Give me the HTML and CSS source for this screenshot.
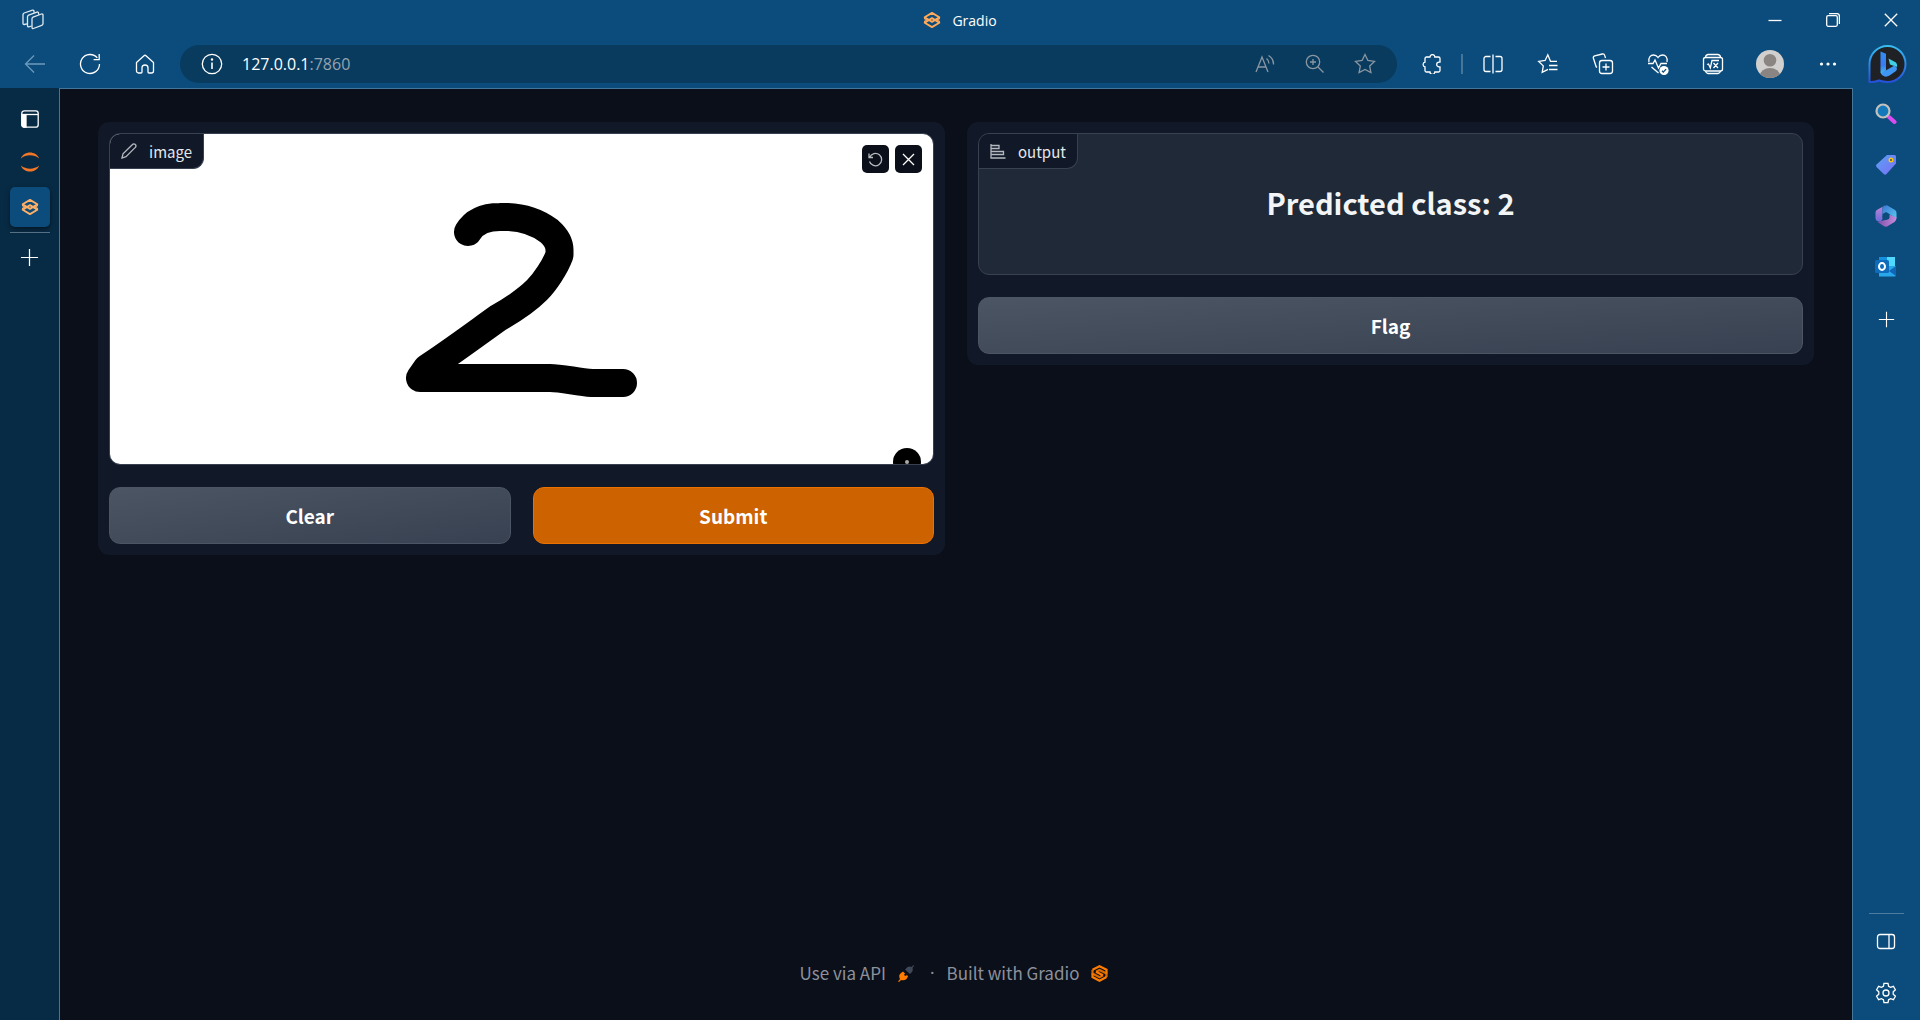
FILE: index.html
```html
<!DOCTYPE html>
<html lang="en">
<head>
<meta charset="utf-8">
<title>Gradio</title>
<link rel="stylesheet" href="styles.css">
</head>
<body>
<svg class="defs" aria-hidden="true">
  <defs>
    <symbol id="gradio" viewBox="0 0 24 24">
      <g fill="none" stroke="currentColor" stroke-width="2.400" stroke-linejoin="round">
        <path d="M12 2.500 21.800 8.300 12 14.500 2.200 8.300Z"/>
        <path d="M12 9.500 21.800 15.700 12 21.500 2.200 15.700Z"/>
        <path d="M2.200 8.300v2l3 1.700-3 1.700v2M21.800 8.300v2l-3 1.700 3 1.700v2" stroke-width="1.600"/>
      </g>
    </symbol>
    <symbol id="plus" viewBox="0 0 20 20"><path d="M10 1v18M1 10h18" fill="none" stroke="currentColor" stroke-width="1.3"/></symbol>
    <linearGradient id="bingRing" x1="0" y1="0" x2="0" y2="1"><stop offset="0" stop-color="#37bdf0"/><stop offset="1" stop-color="#2450d8"/></linearGradient>
    <linearGradient id="bingB" x1="0" y1="0" x2="0" y2="1"><stop offset="0" stop-color="#2f8ff5"/><stop offset=".6" stop-color="#3a7af2"/><stop offset="1" stop-color="#43c6ee"/></linearGradient>
    <linearGradient id="tagFill" x1="0" y1="0" x2="1" y2="1"><stop offset="0" stop-color="#5ba2f4"/><stop offset="1" stop-color="#7a6df5"/></linearGradient>
    <linearGradient id="mA" x1="0" y1="0" x2="0" y2="1"><stop offset="0" stop-color="#c684d8"/><stop offset="1" stop-color="#6a6bd8"/></linearGradient>
    <linearGradient id="mB" x1="0" y1="0" x2="1" y2="1"><stop offset="0" stop-color="#3b78d4"/><stop offset="1" stop-color="#58c9ee"/></linearGradient>
    <linearGradient id="mC" x1="0" y1="0" x2="1" y2="0"><stop offset="0" stop-color="#7b4fa8"/><stop offset="1" stop-color="#c98bdc"/></linearGradient>
  </defs>
</svg>

<header class="chrome">
  <div class="titlebar">
    <button class="workspaces" aria-label="Workspaces">
      <svg width="22" height="22" viewBox="0 0 22 22" class="line"><path d="M11 8.200l8.500-3.200a1.100 1.100 0 0 1 1.500 1v8.500a2 2 0 0 1-1.300 1.900L11.400 19.500a1 1 0 0 1-1.400-1V9.800a1.800 1.800 0 0 1 1-1.600Z"/><path d="M9.500 17 6.800 17.800A1 1 0 0 1 5.500 16.800V7.800A2 2 0 0 1 6.600 6.100L15 3.100a1.200 1.200 0 0 1 1.600 1.200v1.500"/><path d="M5 14.800 2.200 15.500A1 1 0 0 1 1 14.500V5.600A2 2 0 0 1 2.200 4L10.500 1.200A1.200 1.200 0 0 1 12 2.200v1.500"/></svg>
    </button>
    <div class="title"><svg width="18" height="18"><use href="#gradio"/></svg><span>Gradio</span></div>
    <div class="window-buttons">
      <button aria-label="Minimize"><svg width="14" height="14" class="line"><path d="M.5 7.500h13"/></svg></button>
      <button aria-label="Restore"><svg width="14" height="14" class="line"><rect x=".7" y="2.700" width="10.600" height="10.600" rx="1.500"/><path d="M3 .6h8a2.400 2.400 0 0 1 2.400 2.400v8"/></svg></button>
      <button aria-label="Close"><svg width="14" height="14" class="line"><path d="M.8.8l12.400 12.400M13.200.8.8 13.200"/></svg></button>
    </div>
  </div>
  <nav class="toolbar">
    <button class="tool faded" aria-label="Back"><svg width="22" height="20" class="line"><path d="M21 10H1.500M10 1.500 1.500 10l8.500 8.500"/></svg></button>
    <button class="tool" aria-label="Refresh"><svg width="22" height="22" class="line"><path d="M20.500 11a9.500 9.500 0 1 1-2.200-6.100M20.200 1v5.600h-5.600"/></svg></button>
    <button class="tool" aria-label="Home"><svg width="20" height="20" class="line"><path d="M1.500 8.500 9 1.700a1.500 1.500 0 0 1 2 0l7.500 6.800V17a2 2 0 0 1-2 2H14a1 1 0 0 1-1-1v-4a3 3 0 0 0-6 0v4a1 1 0 0 1-1 1H3.500a2 2 0 0 1-2-2Z"/></svg></button>
    <div class="address">
      <svg width="22" height="22" class="line"><circle cx="11" cy="11" r="9.700"/><path d="M11 9.500v6.500" stroke-width="1.600"/><circle cx="11" cy="6.500" r=".6" fill="currentColor"/></svg>
      <p class="url"><span>127.0.0.1</span>:7860</p>
      <button class="hint" aria-label="Read aloud"><svg width="20" height="20" class="line"><path d="M1 18 7 3l6 15M3 13h8M11.500 4.500a6.500 6.500 0 0 1 2.500 5M13.500 1.500a10 10 0 0 1 5 9"/></svg></button>
      <button class="hint" aria-label="Zoom"><svg width="20" height="20" class="line"><circle cx="8" cy="8" r="6.700"/><path d="M13 13l5.500 5.500M8 5v6M5 8h6"/></svg></button>
      <button class="hint" aria-label="Add to favorites"><svg width="22" height="22" class="line"><path d="M11 1.500l2.900 6 6.600.9-4.800 4.600 1.200 6.600-5.900-3.200-5.900 3.200 1.200-6.600L1.500 8.400l6.600-.9Z"/></svg></button>
    </div>
    <button class="tool ext" aria-label="Extensions"><svg width="20" height="20" class="line"><path d="M8 3a2.400 2.400 0 0 1 4.800 0h3.700a1.500 1.500 0 0 1 1.500 1.500v3.700h-1a2.300 2.300 0 0 0 0 4.600h1v3.700a1.500 1.500 0 0 1-1.500 1.500h-3.700a2.400 2.400 0 0 1-4.800 0H4.500A1.500 1.500 0 0 1 3 16.500v-3.700a2.400 2.400 0 0 1 0-4.700V4.500A1.500 1.500 0 0 1 4.500 3Z"/></svg></button>
    <span class="divider"></span>
    <button class="tool" aria-label="Split screen"><svg width="20" height="20" class="line"><path d="M7.500 2.500H3a2 2 0 0 0-2 2v11a2 2 0 0 0 2 2h4.500M12.500 2.500H17a2 2 0 0 1 2 2v11a2 2 0 0 1-2 2h-4.500M10 .5v19"/></svg></button>
    <button class="tool" aria-label="Favorites"><svg width="22" height="22" class="line"><path d="M20 8.300h-6.500l-2.700-6.500-2.700 5.700-6.400.9 4.600 4.500-1.100 6.500 5.800-3M12 12.500h8.500M12 16.500h8.500"/></svg></button>
    <button class="tool" aria-label="Collections"><svg width="22" height="22" class="line"><rect x="7.500" y="7.500" width="13" height="13" rx="2.500"/><path d="M14 10.500v7M10.500 14h7M5 14.500 4.200 13.800 1.400 5.300a2 2 0 0 1 1.300-2.500L10.300 1a2 2 0 0 1 2.400 1.400l.8 2.600"/></svg></button>
    <button class="tool" aria-label="Browser essentials"><svg width="22" height="22" class="line"><path d="M2 9C1 4 4 2 6.500 2 9 2 10.300 3.500 11 4.500 11.700 3.500 13 2 15.500 2 18 2 21 4 20 9M1 10.500h5l2-3.500 3.500 8 2.500-4.500h6M4.500 14l7 6"/><circle cx="17" cy="17.500" r="4.600" fill="currentColor" stroke="none"/><path d="M15 17.800l1.300 1.300 2.800-3" stroke="#0c4c7c"/></svg></button>
    <button class="tool" aria-label="Math solver"><svg width="22" height="22" class="line"><rect x="1.500" y="4.500" width="19" height="13.500" rx="2"/><path d="M3.500 4.500a3 3 0 0 1 2.500-3h10a3 3 0 0 1 2.500 3M3.500 18a3 3 0 0 0 2.500 2.500h10a3 3 0 0 0 2.500-2.500M5 11.500l1.500-.5 1.800 4 1.700-7.500h7M11.500 10l4.500 5M16 10l-4.500 5"/></svg></button>
    <button class="tool profile" aria-label="Profile"><svg width="28" height="28"><clipPath id="av"><circle cx="14" cy="14" r="14"/></clipPath><g clip-path="url(#av)"><rect width="28" height="28" fill="#d2d0ce"/><circle cx="14" cy="10.300" r="6.300" fill="#8a8583"/><ellipse cx="14" cy="25.500" rx="10" ry="7.500" fill="#8a8583"/></g></svg></button>
    <button class="tool" aria-label="Settings and more"><svg width="18" height="6" fill="#fff"><circle cx="2.500" cy="3" r="1.600"/><circle cx="9" cy="3" r="1.600"/><circle cx="15.500" cy="3" r="1.600"/></svg></button>
    <button class="tool bing" aria-label="Bing chat"><svg width="40" height="40"><path d="M2.500 38V20A18 18 0 1 1 20.500 38Q16 38 12 36.500 8 38.500 2.500 38Z" fill="#202124" stroke="url(#bingRing)" stroke-width="2"/><path d="M13.500 7.500 19 9.700V26.500L14.500 30.500 13.500 28.500Z" fill="url(#bingB)"/><path d="M21.500 14.500 29 18.500Q30.500 20 30 23L23 20.500Z" fill="#3fd0e4"/><path d="M14.300 29 27.500 21.500Q31.500 24 29 27L22.500 31.500Q18.500 34 15 31Z" fill="#3f96f3"/></svg></button>
  </nav>
</header>

<div class="workspace">
  <aside class="tabs">
    <button class="tab-tool" aria-label="Tab actions"><svg width="18" height="18" class="line"><rect x=".8" y=".8" width="16.400" height="16.400" rx="2.500"/><path d="M1 4.500h16"/><path d="M1 5h4v12H3a2 2 0 0 1-2-2Z" fill="#fff"/></svg></button>
    <button class="tab-tool" aria-label="Jupyter"><svg width="20" height="20" fill="#f37726"><path d="M.8 6.500C4-1.500 16-1.500 19.200 6.500 14 2.300 6 2.300.8 6.500ZM.8 13.500C4 21.500 16 21.500 19.200 13.500 14 17.700 6 17.700.8 13.500Z"/></svg></button>
    <button class="tab-active" aria-label="Gradio"><svg width="18" height="18"><use href="#gradio"/></svg></button>
    <hr class="tab-rule">
    <button class="tab-new" aria-label="New tab"><svg width="19" height="19"><use href="#plus"/></svg></button>
  </aside>

  <main class="page">
    <div class="columns">
      <section class="panel">
        <div class="block">
          <svg class="canvas" viewBox="0 0 823 330" aria-label="Sketch of the digit 2">
            <rect width="823" height="330" fill="#fff"/>
            <path d="M358 98C364 88 374 83 390 83C411 82 427 88 439 97C447 104 449.500 110 449.500 116V121C445 133 435 148 427 156C417 166 402 176 388 184C367 199 336 222 317 234L310 244H440C452 244 467 248 482 249H513" fill="none" stroke="#000" stroke-width="28" stroke-linecap="round" stroke-linejoin="round"/>
            <circle cx="797" cy="328" r="14"/><circle cx="797" cy="328" r="2" fill="#aaa"/>
          </svg>
          <span class="label"><svg width="16" height="16" viewBox="0 0 16 16" class="line"><path d="M1 15l1-4.200L11.500 1.500a1.800 1.800 0 0 1 2.800 0 1.900 1.900 0 0 1 0 2.900L5 13.700Z"/></svg>image</span>
          <div class="canvas-tools">
            <button aria-label="Undo"><svg width="15" height="15" viewBox="0 0 15 15" class="line"><path d="M1.700 5.200A6.200 6.200 0 1 1 1.500 9.500M1 1.500v4h4"/></svg></button>
            <button aria-label="Remove"><svg width="13" height="13" viewBox="0 0 13 13" class="line cross"><path d="M1 1l11 11M12 1 1 12"/></svg></button>
          </div>
        </div>
        <div class="actions">
          <button class="btn">Clear</button>
          <button class="btn primary">Submit</button>
        </div>
      </section>
      <section class="panel">
        <div class="block result">
          <span class="label"><svg width="16" height="16" viewBox="0 0 16 16" class="line"><path d="M1 1v14h14.500M1 2.500h8v3H1M1 8.500h12.500v3H1"/></svg>output</span>
          <h2>Predicted class: 2</h2>
        </div>
        <button class="btn">Flag</button>
      </section>
    </div>
    <footer class="footer">
      <a href="#api">Use via API <svg width="16" height="17" viewBox="0 0 16 17"><path d="M0 16.500 2 14Q0 10 3 8L5 6.500 7 8.500 6 10l1.500 1L9 10l1 1.500L8.500 14Q6 16 3 15L1 17Z" fill="#ff7c00"/><path d="M7 4.500 9.500 2Q12 1 13.500 2L15.500 0l.5.800L14.500 3q1 2-.5 4L12 9Z" fill="#3f4859"/></svg></a>
      <span class="dot">·</span>
      <a href="#gradio-app">Built with Gradio <svg width="17" height="17" viewBox="0 0 17 17" fill="none" stroke-width="2.200"><path d="M1.500 4.800V8.500L8.500 12.200 12 10.300M15.500 12V8.500L8.500 4.900 5 6.700" stroke="#d96b00"/><path d="M15.500 8.500V4.800L8.500 1.300 1.500 4.800M5 6.700 8.500 8.500 12 10.300M1.500 8.500V12L8.500 15.700 15.500 12" stroke="#ff7c00"/></svg></a>
    </footer>
  </main>

  <aside class="apps">
    <button aria-label="Search"><svg width="22" height="22"><path d="M14 14l5.500 5" stroke="#d84cf0" stroke-width="4" stroke-linecap="round"/><circle cx="8" cy="8" r="6.500" fill="#1479ba" stroke="#c4c1bd" stroke-width="2.200"/></svg></button>
    <button aria-label="Shopping"><svg width="22" height="22"><path d="M12 1h7.500a1.500 1.500 0 0 1 1.500 1.500V9.500L11.500 20a2 2 0 0 1-2.800 0L1.500 13a2 2 0 0 1 0-2.600Z" fill="url(#tagFill)"/><circle cx="16" cy="6" r="1.700" fill="#345" stroke="#f5c518" stroke-width="1.600"/></svg></button>
    <button aria-label="Microsoft 365"><svg width="22" height="22"><path d="M11 0 7.500 2.200V14L5.500 17 2 16Q.5 15 .5 13V7.500Q.5 5.500 2.500 4.400Z" fill="url(#mA)"/><path d="M9 1 12 .2 20 5Q21.500 6 21.500 8v5.500L14 9 7.500 11V3Z" fill="url(#mB)"/><path d="M21.500 12.500Q21.500 15.500 19.500 17L12 21.500Q10.500 22 9 21.200L2.500 17 14 14V9.500Z" fill="url(#mC)"/><path d="M7.500 9 11 7l3.500 2v4L11 15l-3.500-2Z" fill="#0c4c7c"/></svg></button>
    <button aria-label="Outlook"><svg width="22" height="22"><path d="M4 1h9v9H4Z" fill="#1490df"/><path d="M12 1h8v10h-8Z" fill="#50d9ff"/><path d="M4 10h17v9a1.500 1.500 0 0 1-1.500 1.500H4Z" fill="#28a8ea"/><path d="M21 10v10l-7-5Z" fill="#1066b5"/><rect y="4" width="14" height="13" rx="1.500" fill="#0f6cbd"/><ellipse cx="7" cy="10.500" rx="3" ry="3.400" fill="none" stroke="#fff" stroke-width="2"/></svg></button>
    <button class="add" aria-label="Customize"><svg width="17" height="17"><use href="#plus"/></svg></button>
    <hr class="apps-rule">
    <button aria-label="Hide sidebar"><svg width="20" height="17" class="line"><rect x="1.500" y="1.500" width="17" height="14" rx="2.500"/><path d="M13 2v13"/></svg></button>
    <button aria-label="Settings"><svg width="22" height="22" viewBox="0 0 22 22" class="line"><path d="M9 1.300h4l.6 2.900 2 1.100 2.800-1 2 3.500-2.200 2v2.400l2.200 2-2 3.500-2.800-1-2 1.100-.6 2.900H9l-.6-2.900-2-1.100-2.800 1-2-3.500 2.200-2V9.800l-2.200-2 2-3.500 2.800 1 2-1.100Z"/><circle cx="11" cy="11" r="3"/></svg></button>
  </aside>
</div>
</body>
</html>
```

FILE: styles.css
```css
* { box-sizing: border-box; }

body {
  margin: 0;
  min-height: 100vh;
  display: flex;
  flex-direction: column;
  background: #0b0f19;
  color: #fff;
  font-family: "Noto Sans CJK SC", "Noto Sans", sans-serif;
}

button {
  display: flex;
  align-items: center;
  justify-content: center;
  padding: 0;
  border: 0;
  background: none;
  color: inherit;
  font: inherit;
}

svg { display: block; flex: none; }
.defs { position: absolute; width: 0; height: 0; }
.line { fill: none; stroke: currentColor; stroke-width: 1.3; }

/* Browser frame */
.chrome {
  background: #0c4c7c;
  font-family: "Open Sans", sans-serif;
}
.titlebar {
  display: grid;
  grid-template-columns: 1fr auto 1fr;
  height: 40px;
}
.workspaces { width: 65px; color: #dfe9f1; }
.title {
  display: flex;
  align-items: center;
  gap: 11px;
  font-size: 14px;
}
.title svg { color: #ffa95a; }
.window-buttons { display: flex; justify-content: flex-end; }
.window-buttons button { width: 58px; }

.toolbar {
  display: flex;
  align-items: center;
  height: 48px;
  padding-left: 7px;
}
.tool { width: 55px; height: 48px; }
.faded { color: #6c9abb; }
.ext { margin-left: 7px; }
.profile { width: 60px; }
.bing { width: 65px; padding-right: 2px; }
.divider {
  width: 2px;
  height: 20px;
  margin: 0 2px;
  background: #44769b;
}
.address {
  flex: 1;
  display: flex;
  align-items: center;
  height: 38px;
  margin-left: 8px;
  padding: 0 7px 0 21px;
  border-radius: 19px;
  background: #093b5f;
}
.url {
  flex: 1;
  margin: 0 0 0 19px;
  color: #95a3af;
  font-size: 16px;
}
.url span { color: #fff; }
.hint { width: 50px; height: 38px; color: #8a97a2; }

.workspace { flex: 1; display: flex; }

.tabs {
  display: flex;
  flex-direction: column;
  align-items: center;
  width: 59px;
  padding-top: 9px;
  background: #082b45;
}
.tab-tool { width: 40px; height: 43px; }
.tab-active {
  width: 40px;
  height: 40px;
  margin-top: 4px;
  border-radius: 5px;
  background: #0c4c7c;
  box-shadow: 0 2px 5px rgba(0, 0, 0, .5);
  color: #ffb066;
}
.tab-rule {
  width: 40px;
  height: 1px;
  margin: 5px 0 0;
  border: 0;
  background: #557085;
}
.tab-new { width: 40px; height: 48px; }

.apps {
  display: flex;
  flex-direction: column;
  align-items: center;
  width: 67px;
  padding: 0 1px 2px 0;
  background: #0c4c7c;
}
.apps button { width: 44px; height: 51px; }
.apps .add { height: 54px; }
.apps-rule {
  width: 35px;
  height: 1px;
  margin: auto 0 2px;
  border: 0;
  background: #4c7c9f;
}

/* App page */
.page {
  flex: 1;
  display: flex;
  flex-direction: column;
  justify-content: space-between;
  padding: 33px 38px 32px;
  border: 1px solid #44769b;
  border-bottom: 0;
}
.columns {
  display: grid;
  grid-template-columns: 1fr 1fr;
  align-items: start;
  gap: 22px;
}
.panel {
  display: flex;
  flex-direction: column;
  gap: 22px;
  padding: 11px;
  border-radius: 11px;
  background: #111827;
}
.block {
  position: relative;
  overflow: hidden;
  border: 1px solid #374151;
  border-radius: 11px;
  background: #1f2937;
}
.canvas { width: 100%; }
.label {
  position: absolute;
  top: 0;
  left: 0;
  display: flex;
  align-items: center;
  gap: 12px;
  height: 35px;
  padding: 0 11px;
  border: solid #374151;
  border-width: 0 1px 1px 0;
  border-radius: 0 0 11px 0;
  background: #111827;
  color: #e5e7eb;
  font-size: 15px;
}
.label svg { color: #b5b8bf; }
.canvas-tools {
  position: absolute;
  top: 11px;
  right: 11px;
  display: flex;
  gap: 6px;
}
.canvas-tools button {
  width: 27px;
  height: 28px;
  border-radius: 5px;
  background: #0b0f19;
  color: #b8bac0;
}
.canvas-tools .cross { color: #fff; }

.result {
  display: flex;
  justify-content: center;
  height: 142px;
  padding-top: 46px;
}
.result h2 {
  margin: 0;
  color: #f3f4f6;
  font-size: 29px;
  font-weight: 600;
  line-height: 44px;
}

.actions { display: grid; grid-template-columns: 1fr 1fr; gap: 22px; }
.btn {
  height: 57px;
  border: 1px solid #4b5563;
  border-radius: 11px;
  background: linear-gradient(to bottom right, #4b5563, #374151);
  color: #fff;
  font-size: 19px;
  font-weight: 600;
}
.primary { border-color: #ea7000; background: #cc6200; }

.footer {
  display: flex;
  justify-content: center;
  align-items: center;
  gap: 12px;
  padding-right: 4px;
  color: #8b919d;
  font-size: 17px;
  line-height: 30px;
}
.footer a {
  display: flex;
  align-items: center;
  gap: 12px;
  color: inherit;
  text-decoration: none;
}
.dot { margin-left: 4px; font-family: "Noto Sans", sans-serif; }
```
